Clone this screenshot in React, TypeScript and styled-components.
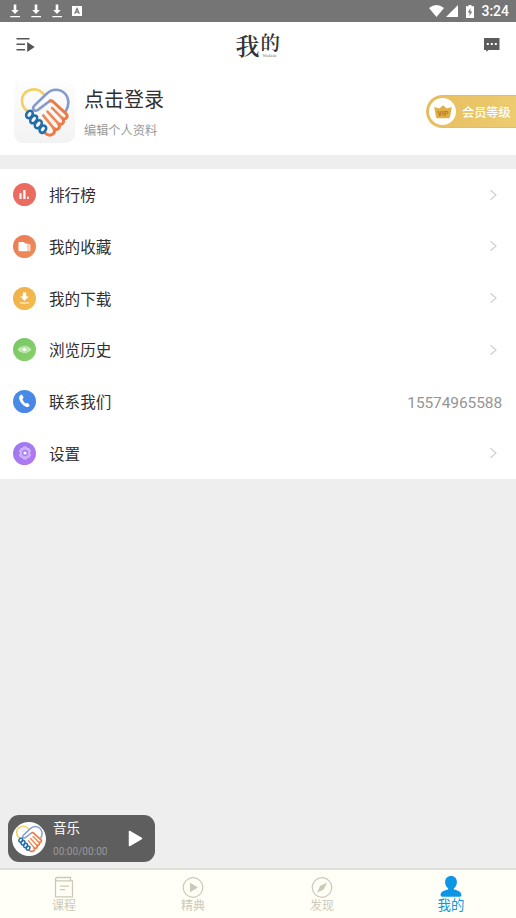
import React from "react";
import styled, { createGlobalStyle } from "styled-components";

const Global = createGlobalStyle`
  * { box-sizing: border-box; }
  html, body { margin: 0; padding: 0; background: #eeeeee; }
  body { font-family: Roboto, "Noto Sans CJK SC", sans-serif; overflow: hidden; }
  svg { display: block; flex: none; }
`;

const Screen = styled.div`
  width: 516px;
  height: 918px;
  display: flex;
  flex-direction: column;
  background: #eeeeee;
`;

const StatusBar = styled.header`
  height: 22px;
  flex: none;
  display: flex;
  align-items: center;
  justify-content: space-between;
  padding: 0 7px 0 9px;
  background: #757575;
  color: #fff;
`;

const StatusGroup = styled.div<{ $gap: number }>`
  display: flex;
  align-items: center;
  gap: ${(p) => p.$gap}px;
`;

const Clock = styled.span`
  font: 500 14px/22px Roboto, sans-serif;
  margin-left: 2px;
`;

const TitleBar = styled.div`
  height: 48px;
  flex: none;
  display: grid;
  grid-template-columns: 1fr auto 1fr;
  align-items: start;
  padding: 0 16px;
  background: #fff;
`;

const BarIcon = styled.div<{ $end?: boolean }>`
  display: flex;
  justify-content: ${(p) => (p.$end ? "flex-end" : "flex-start")};
  padding-top: 15px;
`;

const Brand = styled.h1`
  margin: 9px 0 0;
  display: flex;
  align-items: flex-start;
  color: #333;
  font-family: "Noto Serif CJK SC", "Noto Sans CJK SC", sans-serif;
  font-weight: 600;
`;

const BrandLead = styled.span`
  font-size: 24px;
  line-height: 28px;
  width: 25px;
`;

const BrandSide = styled.span`
  display: flex;
  flex-direction: column;
  width: 20px;
  font-size: 19.5px;
  line-height: 22px;
`;

const BrandCaption = styled.small`
  font: italic 4.5px/4px "Liberation Serif", serif;
  padding: 1px 0 0 2px;
  color: #777;
`;

const Profile = styled.section`
  height: 85px;
  flex: none;
  display: flex;
  align-items: flex-start;
  padding: 11px 0 0 14px;
  background: #fff;
`;

const Avatar = styled.div`
  width: 61px;
  height: 62px;
  border-radius: 9px;
  background: linear-gradient(#fdfdfd, #f3f3f3);
  display: flex;
  align-items: center;
  justify-content: center;
`;

const ProfileText = styled.div`
  flex: 1;
  padding-left: 9px;
`;

const LoginName = styled.div`
  font-size: 20px;
  line-height: 26px;
  margin-top: 6px;
  color: #303030;
`;

const EditHint = styled.div`
  font-size: 12.2px;
  line-height: 18px;
  margin-top: 9px;
  color: #999;
`;

const VipBadge = styled.div`
  width: 90px;
  height: 33px;
  margin-top: 14px;
  padding-left: 4px;
  display: flex;
  align-items: center;
  gap: 6px;
  border-radius: 17px 0 0 17px;
  border: 1px solid #e4bd62;
  border-right: 0;
  background: linear-gradient(100deg, #e6bd5d, #edcc70);
  color: #fff;
  font-size: 12.2px;
  font-weight: 500;
  white-space: nowrap;
`;

const VipDisc = styled.span`
  width: 27px;
  height: 27px;
  flex: none;
  border-radius: 50%;
  background: #fff;
  display: flex;
  align-items: center;
  justify-content: center;
  margin-left: -2px;
`;

const Menu = styled.nav`
  margin-top: 14px;
  height: 310px;
  flex: none;
  display: grid;
  grid-template-rows: repeat(6, 1fr);
  background: #fff;
`;

const MenuRow = styled.div`
  display: flex;
  align-items: center;
  padding: 0 14px 0 13px;
`;

const MenuDisc = styled.span<{ $from: string; $to: string }>`
  width: 23px;
  height: 23px;
  border-radius: 50%;
  background: linear-gradient(135deg, ${(p) => p.$from}, ${(p) => p.$to});
  display: flex;
  align-items: center;
  justify-content: center;
`;

const MenuLabel = styled.span`
  flex: 1;
  padding: 3px 0 0 13px;
  font-size: 15.6px;
  line-height: 22px;
  color: #303030;
`;

const MenuValue = styled.span`
  font-size: 15.5px;
  line-height: 22px;
  padding-top: 3px;
  letter-spacing: -0.1px;
  color: #959595;
`;

const ChevronBox = styled.span`
  padding-right: 4px;
`;

const Spacer = styled.div`
  flex: 1;
`;

const Player = styled.aside`
  width: 147px;
  height: 47px;
  flex: none;
  margin: 0 0 6px 8px;
  padding: 0 12px 0 4px;
  display: flex;
  align-items: center;
  border-radius: 11px;
  background: #5e5e5e;
`;

const PlayerCover = styled.div`
  width: 34px;
  height: 34px;
  flex: none;
  border-radius: 50%;
  background: #fff;
  display: flex;
  align-items: center;
  justify-content: center;
`;

const PlayerText = styled.div`
  flex: 1;
  padding: 1px 0 0 7px;
`;

const Track = styled.div`
  font-size: 13.4px;
  line-height: 18px;
  color: #fff;
`;

const Time = styled.div`
  font-size: 10px;
  line-height: 12px;
  margin-top: 8px;
  letter-spacing: 0.05px;
  color: #999;
`;

const Tabs = styled.footer`
  height: 50px;
  flex: none;
  display: grid;
  grid-template-columns: repeat(4, 1fr);
  border-top: 2px solid #dfdfdc;
  background: #fffff7;
`;

const Tab = styled.div<{ $active?: boolean }>`
  display: flex;
  flex-direction: column;
  align-items: center;
  padding: 6px 1px 0 0;
  color: ${(p) => (p.$active ? "#0e96e6" : "#cdc9b8")};
  font-size: ${(p) => (p.$active ? 13.4 : 12)}px;
  line-height: 14px;
`;

const TabIcon = styled.span`
  height: 23px;
`;

const TabLabel = styled.span`
  white-space: nowrap;
`;

const Handshake = ({ size }: { size: number }) => (
  <svg width={size} height={size} viewBox="23 20 156 156" fill="none" strokeLinecap="round" strokeLinejoin="round">
    <path d="M49 94C25 76 28 43 50 32C67 23 86 27 97 40" stroke="#f3cf62" strokeWidth="8" />
    <path d="M167 92C181 68 172 41 152 32C134 24 117 31 105 43L70 77C61 87 71 97 81 90L118 62" stroke="#849bcb" strokeWidth="8" />
    <path d="M118 63L124 62L165 100C177 111 164 123 155 115C166 128 153 139 143 131C153 145 139 155 129 146C138 162 119 175 103 161" stroke="#ee7945" strokeWidth="9" />
    <path d="M124 84L155 115M110 95L143 131M97 107L129 146" stroke="#f18750" strokeWidth="8" />
    <g stroke="#226da8" strokeWidth="8">
      <ellipse cx="55" cy="104" rx="9" ry="12" transform="rotate(35 55 104)" />
      <ellipse cx="68" cy="119" rx="9" ry="13" transform="rotate(35 68 119)" />
      <ellipse cx="82" cy="134" rx="9" ry="13" transform="rotate(35 82 134)" />
      <ellipse cx="96" cy="149" rx="9" ry="12" transform="rotate(35 96 149)" />
    </g>
  </svg>
);

const DownloadMark = () => (
  <svg width="12" height="14" viewBox="0 0 12 14" fill="#fff">
    <path d="M4.700 .5h2.600v5.500h2.500L6 10 2.200 6h2.500zM1.300 12h9.700v1.300H1.300z" />
  </svg>
);

const Chevron = () => (
  <svg width="9" height="12" viewBox="0 0 9 12" fill="none" stroke="#d0d0d0" strokeWidth="1.200">
    <path d="M1.500 1.200L7 6l-5.500 4.800" />
  </svg>
);

const glyphs = {
  rank: (
    <svg width="13" height="13" viewBox="0 0 13 13" fill="#fff">
      <path d="M1.500 5h2v6h-2zM5.200 2h2.300v9H5.200zM9 8.800h1.800V11H9z" />
    </svg>
  ),
  folder: (
    <svg width="13" height="13" viewBox="0 0 13 13">
      <path fill="#fff" d="M.5 3q0-1 1-1h4.500l1 1.500h2.500V11.300h-8q-1 0-1-1z" />
      <path fill="#fbd8c7" d="M9.500 4H11.500q1 0 1 1v5.300q0 1-1 1H9.500z" />
    </svg>
  ),
  download: (
    <svg width="13" height="13" viewBox="0 0 13 13">
      <path fill="#fff" d="M4.800 .5h3.400v4h2.600l-4.300 4.300-4.300-4.300h2.600z" />
      <path stroke="#fdebb9" strokeWidth="1.400" d="M2 11h9" />
    </svg>
  ),
  eye: (
    <svg width="15" height="11" viewBox="0 0 15 11">
      <path fill="#c5eab6" d="M0.500 5.500Q7.500-2 14.500 5.500Q7.500 13 0.500 5.500z" />
      <circle cx="7.500" cy="5.500" r="2.900" fill="#a4da91" />
      <circle cx="7.500" cy="5.500" r="2.100" fill="#fff" />
    </svg>
  ),
  phone: (
    <svg width="13" height="14" viewBox="0 0 13 14" fill="#fff">
      <path d="M2.200 1.200L4 .6l1.700 3.200-1.300 1.300c.5 1.900 1.700 3.500 3.400 4.500l1.500-.9 2.400 2.400-1.100 1.600c-1 .8-3.300.2-5.200-1.500C2.800 9 .6 5.200 1.200 2.800z" />
    </svg>
  ),
  gear: (
    <svg width="14" height="14" viewBox="0 0 14 14" fill="none">
      <path d="M5.500 1h3l.6 1.700 1.700-.3L12.500 5l-1.200 2 1.200 2-1.700 2.600-1.700-.3-.6 1.700h-3l-.6-1.700-1.700.3L1.500 9l1.200-2-1.200-2 1.700-2.600 1.700.3z" fill="#c7a8fa" stroke="#dac8fd" strokeWidth=".9" />
      <circle cx="7" cy="7" r="2.900" fill="#a779f0" />
      <circle cx="7" cy="7" r="1.600" fill="#fff" />
    </svg>
  ),
};

const menu: { label: string; icon: keyof typeof glyphs; from: string; to: string; value?: string }[] = [
  { label: "排行榜", icon: "rank", from: "#ef6a62", to: "#e66d5e" },
  { label: "我的收藏", icon: "folder", from: "#ec7855", to: "#ed9059" },
  { label: "我的下载", icon: "download", from: "#f0ae4b", to: "#f2be50" },
  { label: "浏览历史", icon: "eye", from: "#78c667", to: "#87d168" },
  { label: "联系我们", icon: "phone", from: "#458ee8", to: "#4c83e5", value: "15574965588" },
  { label: "设置", icon: "gear", from: "#9b7aef", to: "#b578f1" },
];

const tabs = [
  {
    label: "课程",
    icon: (
      <svg width="20" height="23" viewBox="0 0 20 23" fill="none" stroke="currentColor" strokeWidth="1.300">
        <path d="M1.500 3.500q0-2 2-2h13v3M1.500 3.500q0 1.300 1.500 1.300h15.500V20.800h-17zM6 10.200h9M6 13.700h5" />
      </svg>
    ),
  },
  {
    label: "精典",
    icon: (
      <svg width="22" height="23" viewBox="0 0 22 23" fill="none" stroke="currentColor" strokeWidth="1.200">
        <circle cx="11" cy="11.500" r="9.800" />
        <path d="M8 6.800v9.400l8-4.700z" fill="currentColor" stroke="none" />
      </svg>
    ),
  },
  {
    label: "发现",
    icon: (
      <svg width="22" height="23" viewBox="0 0 22 23" fill="none" stroke="currentColor" strokeWidth="1.200">
        <circle cx="11" cy="11.500" r="9.800" />
        <path d="M16 6.500l-3 6.800-7 3.400 3-6.700z" fill="currentColor" stroke="none" />
      </svg>
    ),
  },
  {
    label: "我的",
    active: true,
    icon: (
      <svg width="22" height="23" viewBox="0 0 22 23" fill="currentColor">
        <path d="M11 0c3.700 0 5.900 2.600 5.900 6 0 2.900-1.300 5-3 6.300v1.200c3.800.9 7.500 2.200 7.500 5.200 0 1.400-.8 2.100-2.100 2.100H2.700C1.400 20.800.6 20.100.6 18.700c0-3 3.700-4.300 7.500-5.200v-1.200C6.400 11 5.100 8.900 5.100 6 5.100 2.600 7.300 0 11 0z" />
      </svg>
    ),
  },
];

export default function App() {
  return (
    <Screen>
      <Global />
      <StatusBar>
        <StatusGroup $gap={9}>
          <DownloadMark />
          <DownloadMark />
          <DownloadMark />
          <svg width="10" height="10" viewBox="0 0 10 10">
            <path d="M0 0h10v10H0z" fill="#fff" />
            <path d="M2.700 7.800L5 2.500l2.300 5.300M3.500 6.200h3" stroke="#757575" strokeWidth="1.200" fill="none" />
          </svg>
        </StatusGroup>
        <StatusGroup $gap={2}>
          <svg width="15" height="12" viewBox="0 0 15 12" fill="#fff">
            <path d="M0 3Q7.500-2.800 15 3L7.500 12z" />
          </svg>
          <svg width="12" height="12" viewBox="0 0 12 12" fill="#fff">
            <path d="M12 0v12H0z" />
          </svg>
          <svg width="17" height="13" viewBox="0 0 17 13">
            <path d="M6 1.300h2.500V0h3v1.300H14V13H6z" fill="#fff" />
            <path d="M10.600 3L7.800 7.600h1.900L9.300 11l3-4.600h-2z" fill="#757575" />
          </svg>
          <Clock>3:24</Clock>
        </StatusGroup>
      </StatusBar>

      <TitleBar>
        <BarIcon>
          <svg width="19" height="16" viewBox="0 0 19 16" fill="none" stroke="#555" strokeWidth="1.500">
            <path d="M.5 1.700h13M.5 7.200h8.500M.5 12.800h8.500" />
            <path d="M11.200 5v10l7.500-5z" fill="#555" stroke="none" />
          </svg>
        </BarIcon>
        <Brand>
          <BrandLead>我</BrandLead>
          <BrandSide>
            <span>的</span>
            <BrandCaption>Wodede</BrandCaption>
          </BrandSide>
        </Brand>
        <BarIcon $end>
          <svg width="17" height="16" viewBox="0 0 17 16">
            <path d="M1 1h15.500v12H5.500L3.300 15v-2H1z" fill="#5c5c5c" />
            <path d="M3.800 6h2v2h-2zM7.800 6h2v2h-2zM11.800 6h2v2h-2z" fill="#fff" />
          </svg>
        </BarIcon>
      </TitleBar>

      <Profile>
        <Avatar>
          <Handshake size={51} />
        </Avatar>
        <ProfileText>
          <LoginName>点击登录</LoginName>
          <EditHint>编辑个人资料</EditHint>
        </ProfileText>
        <VipBadge>
          <VipDisc>
            <svg width="18" height="15" viewBox="0 0 18 15">
              <path d="M.3 3.500q.7-1.200 1.500 0l3.500 1 3.700-3.300 3.700 3.300 3.500-1q.8-1.200 1.500 0L16 13q-.2 1.200-1.500 1.200h-11Q2.200 14.200 2 13z" fill="#dfaf48" />
              <text x="9" y="11.500" textAnchor="middle" fontFamily="Roboto" fontSize="7" fill="#a8752a">VIP</text>
            </svg>
          </VipDisc>
          会员等级
        </VipBadge>
      </Profile>

      <Menu>
        {menu.map((m) => (
          <MenuRow key={m.label}>
            <MenuDisc $from={m.from} $to={m.to}>{glyphs[m.icon]}</MenuDisc>
            <MenuLabel>{m.label}</MenuLabel>
            {m.value ? (
              <MenuValue>{m.value}</MenuValue>
            ) : (
              <ChevronBox><Chevron /></ChevronBox>
            )}
          </MenuRow>
        ))}
      </Menu>

      <Spacer />

      <Player>
        <PlayerCover>
          <Handshake size={28} />
        </PlayerCover>
        <PlayerText>
          <Track>音乐</Track>
          <Time>00:00/00:00</Time>
        </PlayerText>
        <svg width="15" height="17" viewBox="0 0 15 17">
          <path d="M1.500 1.500v14l12-7z" fill="#fff" stroke="#fff" strokeWidth="1.500" strokeLinejoin="round" />
        </svg>
      </Player>

      <Tabs>
        {tabs.map((t) => (
          <Tab key={t.label} $active={t.active}>
            <TabIcon>{t.icon}</TabIcon>
            <TabLabel>{t.label}</TabLabel>
          </Tab>
        ))}
      </Tabs>
    </Screen>
  );
}
